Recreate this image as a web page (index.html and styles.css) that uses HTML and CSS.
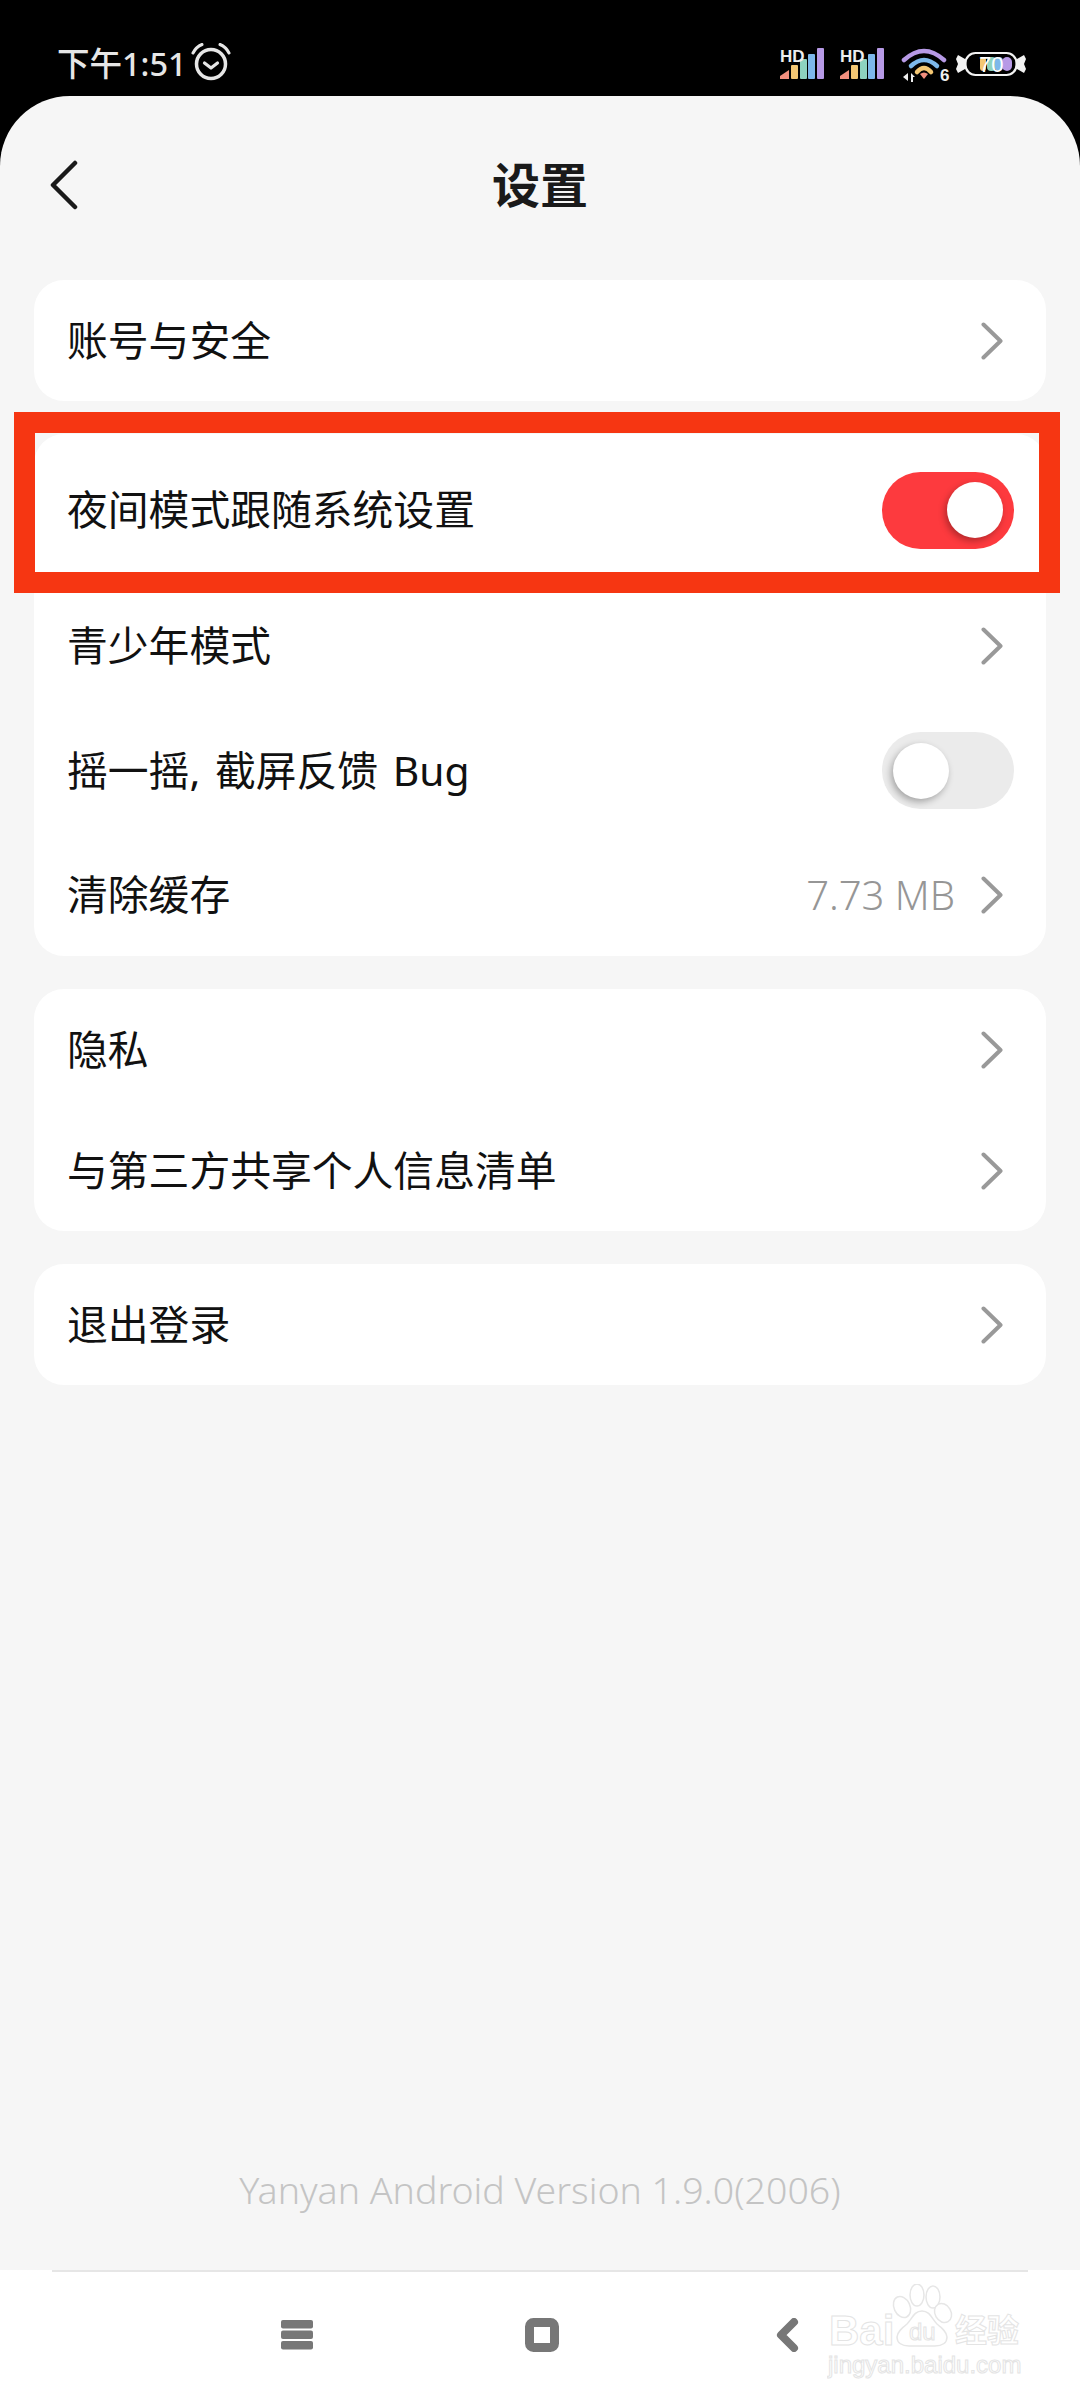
FILE: index.html
```html
<!DOCTYPE html>
<html lang="zh-CN">
<head>
    <meta charset="UTF-8">
    <meta name="viewport" content="width=device-width, initial-scale=1.0">
    <title>设置</title>
    <link rel="stylesheet" href="styles.css">
</head>
<body>
    <div class="status-bar">
        <div class="status-left">
            <span class="status-time">下午1:51</span>
            <svg class="alarm-icon" viewBox="0 0 40 38" width="40" height="38">
                <circle cx="20" cy="21" r="14.5" fill="none" stroke="#e6e6e6" stroke-width="3.5"/>
                <path d="M13.5 20l6.5 5 6.5-5" fill="none" stroke="#e6e6e6" stroke-width="3.2" stroke-linecap="round" stroke-linejoin="round"/>
                <path d="M2 10Q5 4 11 1.500M38 10Q35 4 29 1.500" fill="none" stroke="#e6e6e6" stroke-width="3" stroke-linecap="round"/>
            </svg>
        </div>
        <div class="status-right">
            <svg class="signal-icon" viewBox="0 0 44 32" width="44" height="32">
                <path d="M0 32v-3l9-6v9z" fill="#f28f7e"/>
                <rect x="11" y="18" width="7" height="14" rx="1" fill="#f4c773"/>
                <rect x="20" y="12" width="7" height="20" rx="1" fill="#8dd3bf"/>
                <rect x="28" y="7" width="7" height="25" rx="1" fill="#7db8ea"/>
                <rect x="37" y="1" width="7" height="31" rx="1" fill="#b79ae6"/>
                <text x="0" y="15" class="hd-text">HD</text>
            </svg>
            <svg class="signal-icon" viewBox="0 0 44 32" width="44" height="32">
                <path d="M0 32v-3l9-6v9z" fill="#f28f7e"/>
                <rect x="11" y="18" width="7" height="14" rx="1" fill="#f4c773"/>
                <rect x="20" y="12" width="7" height="20" rx="1" fill="#8dd3bf"/>
                <rect x="28" y="7" width="7" height="25" rx="1" fill="#7db8ea"/>
                <rect x="37" y="1" width="7" height="31" rx="1" fill="#b79ae6"/>
                <text x="0" y="15" class="hd-text">HD</text>
            </svg>
            <svg class="wifi-icon" viewBox="0 0 52 38" width="52" height="38">
                <path d="M3 13Q23 -5 43 13" fill="none" stroke="#b79ae6" stroke-width="4.500" stroke-linecap="round"/>
                <path d="M10 19Q23 7 36 19" fill="none" stroke="#7db8ea" stroke-width="4.500" stroke-linecap="round"/>
                <path d="M16 25Q23 17 30 25" fill="none" stroke="#f4c773" stroke-width="4.500" stroke-linecap="round"/>
                <path d="M19 27q4-3 8 0l-4 5z" fill="#f28f7e"/>
                <path d="M7 26v8l-5-4zM10 26l4 4h-2v5h-2z" fill="#eee"/>
                <text x="39" y="34" class="wifi-text">6</text>
            </svg>
            <svg class="battery-icon" viewBox="0 0 72 26" width="72" height="26">
                <path d="M10 8L3 4 1 8l2 5-2 5 2 4 7-4zM62 8l7-4 2 4-2 5 2 5-2 4-7-4z" fill="#f2f2f2"/>
                <rect x="10.500" y="2" width="51" height="22" rx="10" fill="#000" stroke="#f2f2f2" stroke-width="2.200"/>
                <rect x="25" y="6" width="6" height="14" rx="3" fill="#f4c773"/>
                <rect x="32" y="6" width="9" height="14" rx="4" fill="#8dd3bf"/>
                <rect x="40" y="6" width="8" height="14" rx="4" fill="#7db8ea"/>
                <rect x="47" y="6" width="10" height="14" rx="5" fill="#b79ae6"/>
                <text x="24" y="21" class="battery-text">70</text>
            </svg>
        </div>
    </div>

    <div class="sheet">
        <div class="nav">
            <svg class="back-icon" viewBox="0 0 30 50" width="30" height="50">
                <path d="M26 3L4 25l22 22" fill="none" stroke="#1a1a1a" stroke-width="4.500" stroke-linecap="round" stroke-linejoin="round"/>
            </svg>
            <h1>设置</h1>
        </div>

        <div class="card">
            <div class="row row-single">
                <span class="row-label">账号与安全</span>
                <svg class="chevron" viewBox="0 0 22 38" width="22" height="38"><path d="M2.500 2.500L19.500 19l-17 16.500"/></svg>
            </div>
        </div>

        <div class="card">
            <div class="row row-night">
                <span class="row-label">夜间模式跟随系统设置</span>
                <div class="toggle toggle-on"><div class="knob"></div></div>
            </div>
            <div class="row">
                <span class="row-label">青少年模式</span>
                <svg class="chevron" viewBox="0 0 22 38" width="22" height="38"><path d="M2.500 2.500L19.500 19l-17 16.500"/></svg>
            </div>
            <div class="row">
                <span class="row-label row-label-spaced">摇一摇, 截屏反馈 Bug</span>
                <div class="toggle"><div class="knob"></div></div>
            </div>
            <div class="row row-last">
                <span class="row-label">清除缓存</span>
                <div class="row-right">
                    <span class="row-value">7.73 MB</span>
                    <svg class="chevron" viewBox="0 0 22 38" width="22" height="38"><path d="M2.500 2.500L19.500 19l-17 16.500"/></svg>
                </div>
            </div>
        </div>

        <div class="card">
            <div class="row row-double">
                <span class="row-label">隐私</span>
                <svg class="chevron" viewBox="0 0 22 38" width="22" height="38"><path d="M2.500 2.500L19.500 19l-17 16.500"/></svg>
            </div>
            <div class="row row-double">
                <span class="row-label">与第三方共享个人信息清单</span>
                <svg class="chevron" viewBox="0 0 22 38" width="22" height="38"><path d="M2.500 2.500L19.500 19l-17 16.500"/></svg>
            </div>
        </div>

        <div class="card">
            <div class="row row-single">
                <span class="row-label">退出登录</span>
                <svg class="chevron" viewBox="0 0 22 38" width="22" height="38"><path d="M2.500 2.500L19.500 19l-17 16.500"/></svg>
            </div>
        </div>

        <div class="version">Yanyan Android Version 1.9.0(2006)</div>
    </div>

    <div class="bottom-bar">
        <div class="bottom-line"></div>
        <div class="bottom-icons">
            <svg viewBox="0 0 32 30" width="32" height="30">
                <rect y="0" width="32" height="8.500" rx="2" fill="#777"/>
                <rect y="10.500" width="32" height="8.500" rx="2" fill="#777"/>
                <rect y="21" width="32" height="8.500" rx="2" fill="#777"/>
            </svg>
            <svg viewBox="0 0 34 34" width="34" height="34">
                <rect x="4.500" y="4.500" width="25" height="25" rx="4" fill="none" stroke="#777" stroke-width="9"/>
            </svg>
            <svg viewBox="0 0 24 34" width="24" height="34">
                <path d="M19 4L6 17l13 13" fill="none" stroke="#777" stroke-width="8" stroke-linecap="round" stroke-linejoin="round"/>
            </svg>
        </div>
    </div>

    <!-- annotation and watermark sit on top of the screenshot -->
    <div class="red-frame"></div>
    <svg class="watermark" viewBox="0 0 200 100" width="200" height="100">
        <g class="wm-shape">
            <ellipse cx="75" cy="23" rx="8" ry="11" transform="rotate(-25 75 23)"/>
            <ellipse cx="90" cy="11" rx="7" ry="11"/>
            <ellipse cx="106" cy="13" rx="7" ry="11"/>
            <ellipse cx="116" cy="29" rx="8" ry="10" transform="rotate(-30 116 29)"/>
            <path d="M95 27c-8 0-10 8-15 13-5 4-10 8-10 13 0 6 5 9 12 9h26c7 0 12-3 12-9 0-5-5-9-10-13-5-5-7-13-15-13z"/>
        </g>
        <text x="2" y="61" class="wm-big">Bai</text>
        <text x="82" y="56" class="wm-small">du</text>
        <text x="128" y="58" class="wm-cn">经验</text>
        <text x="1" y="89" class="wm-url">jingyan.baidu.com</text>
    </svg>
</body>
</html>
```

FILE: styles.css
```css
* {
    margin: 0;
    padding: 0;
    box-sizing: border-box;
}

body {
    width: 1080px;
    height: 2400px;
    background-color: #000;
    color: #111;
    font-family: "Noto Sans", "Noto Sans CJK SC", sans-serif;
    display: flex;
    flex-direction: column;
    overflow: hidden;
}

/* status bar */
.status-bar {
    height: 96px;
    flex: none;
    display: flex;
    justify-content: space-between;
    padding: 0 53px 0 57px;
}

.status-left {
    display: flex;
    align-items: center;
    gap: 4px;
    height: 124px;
}

.status-time {
    color: #e6e6e6;
    font-size: 32.500px;
    font-weight: 500;
}

.status-right {
    display: flex;
    align-items: flex-start;
    padding-top: 47px;
}

.signal-icon {
    margin-right: 16px;
}

.hd-text {
    fill: #eee;
    font-family: "Liberation Sans", sans-serif;
    font-size: 17px;
    font-weight: 700;
}

.wifi-icon {
    margin: 0 2px 0 1px;
}

.wifi-text {
    fill: #eee;
    font-family: "Liberation Sans", sans-serif;
    font-size: 17px;
    font-weight: 700;
}

.battery-icon {
    margin-top: 4px;
}

.battery-text {
    fill: #fff;
    font-family: "Liberation Sans", sans-serif;
    font-size: 22px;
}

/* main sheet */
.sheet {
    flex: 1;
    background-color: #f6f6f6;
    border-radius: 70px 70px 0 0;
    display: flex;
    flex-direction: column;
}

.nav {
    height: 178px;
    margin-bottom: 6px;
    display: grid;
    grid-template-columns: 1fr auto 1fr;
    align-items: center;
}

.back-icon {
    margin-left: 49px;
}

.nav h1 {
    font-size: 48px;
    font-weight: 700;
    color: #1a1a1a;
    padding-bottom: 6px;
}

.card {
    margin: 0 34px 33px;
    background-color: #fff;
    border-radius: 30px;
}

.row {
    height: 125px;
    display: flex;
    align-items: center;
    justify-content: space-between;
    padding: 0 32px 0 33px;
    font-size: 40.800px;
}

.row-label {
    padding-bottom: 5px;
}

.row-label-spaced {
    word-spacing: 4px;
}

.row-single {
    height: 121px;
}

.row-night {
    height: 149px;
    padding-top: 3px;
}

.row-last {
    height: 123px;
}

.row-double {
    height: 121px;
}

.row-right {
    display: flex;
    align-items: center;
}

.row-value {
    color: #969696;
    font-size: 40px;
    font-weight: 300;
    margin-right: 26px;
}

.chevron {
    margin-right: 11px;
}

.chevron path {
    fill: none;
    stroke: #999;
    stroke-width: 4px;
    stroke-linecap: round;
    stroke-linejoin: round;
}

.toggle {
    width: 132px;
    height: 77px;
    border-radius: 39px;
    background-color: #ebebeb;
    display: flex;
    align-items: center;
    padding: 0 11px;
}

.toggle-on {
    background-color: #fd3a3e;
    justify-content: flex-end;
}

.knob {
    width: 56px;
    height: 56px;
    border-radius: 50%;
    background-color: #fff;
    box-shadow: -2px 3px 7px rgba(0, 0, 0, 0.3);
}

.version {
    margin-top: auto;
    padding-bottom: 55px;
    text-align: center;
    color: #c4c4c4;
    font-size: 37.500px;
    font-weight: 300;
}

/* bottom navigation */
.bottom-bar {
    height: 130px;
    flex: none;
    background-color: #fff;
}

.bottom-line {
    height: 2px;
    margin: 0 52px;
    background-color: #e6e6e6;
}

.bottom-icons {
    height: 128px;
    display: grid;
    grid-template-columns: repeat(3, 245px);
    justify-items: center;
    align-items: center;
    padding: 0 0 2px 174px;
}

/* overlays */
.red-frame {
    position: absolute;
    left: 14px;
    top: 412px;
    width: 1046px;
    height: 181px;
    border: 21px solid #f63612;
}

.watermark {
    position: absolute;
    left: 827px;
    top: 2284px;
}

.wm-shape {
    fill: #fff;
    stroke: #e6e6e6;
    stroke-width: 1.500;
}

.watermark text {
    fill: #fff;
    stroke: #e4e4e4;
    stroke-width: 1;
}

.wm-big {
    font-family: "Liberation Sans", sans-serif;
    font-size: 42px;
    font-weight: 700;
}

.wm-small {
    font-family: "Liberation Sans", sans-serif;
    font-size: 24px;
}

.wm-cn {
    font-family: "Noto Sans CJK SC", sans-serif;
    font-size: 32px;
    font-weight: 700;
}

.wm-url {
    font-family: "Liberation Sans", sans-serif;
    font-size: 24px;
}
```
